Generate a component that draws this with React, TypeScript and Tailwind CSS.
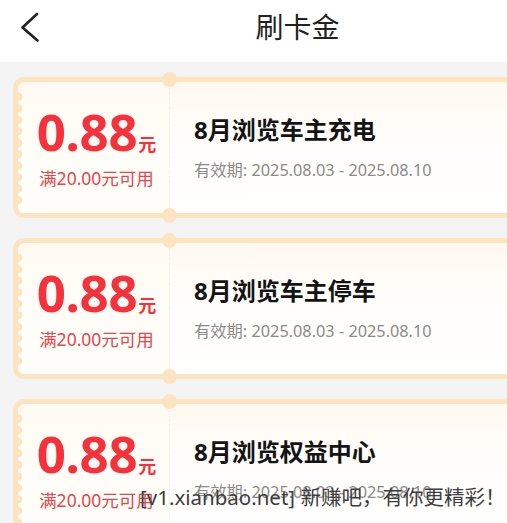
import React from 'react'

const coupons = [
  { id: 1, title: '8月浏览车主充电' },
  { id: 2, title: '8月浏览车主停车' },
  { id: 3, title: '8月浏览权益中心' },
]

const sans = "font-['Noto_Sans','Noto_Sans_CJK_SC',sans-serif]"

function Coupon({ title }: { title: string }) {
  return (
    <div className="flex h-[141px] rounded-[11px] border-[5px] border-[#fde4c1] bg-[linear-gradient(180deg,#fff8ef_0%,#fffdfa_40%,#ffffff_100%)]">
      {/* scalloped left edge */}
      <div className="my-[9px] w-[6px] shrink-0 bg-[radial-gradient(circle_at_0_50%,#fde4c1_4px,transparent_4.6px)] bg-[length:6px_11.5px] bg-repeat-y" />

      {/* amount */}
      <div className="flex w-[145px] shrink-0 flex-col items-center justify-center bg-[#fffbf5]/60">
        <div className="flex items-baseline font-bold text-[#f5323c]">
          <span className="text-[51px] leading-none tracking-[-0.3px]">0.88</span>
          <span className="ml-[1px] text-[18px] leading-none">元</span>
        </div>
        <div className="mt-[9px] text-[17.5px] leading-[24px] text-[#e2474d]">满20.00元可用</div>
      </div>

      {/* divider with notches */}
      <div className="flex w-0 shrink-0 flex-col justify-between border-l border-dashed border-[#fcefdc]">
        <div className="-mt-[10px] -ml-[8px] size-[15px] rounded-full bg-[#fde4c1]" />
        <div className="-mb-[10px] -ml-[8px] size-[15px] rounded-full bg-[#fde4c1]" />
      </div>

      {/* info */}
      <div className="flex flex-col justify-center pl-[24px]">
        <div className="text-[24px] font-bold leading-[30px] text-[#141414]">{title}</div>
        <div className="mt-[14px] text-[16.3px] leading-[22px] text-[#8a8a8a]">
          有效期: 2025.08.03 - 2025.08.10
        </div>
      </div>
    </div>
  )
}

export default function App() {
  return (
    <div className={`relative h-[523px] w-[507px] overflow-hidden bg-[#f4f4f4] ${sans}`}>
      <div className="w-[595px]">
        {/* Header */}
        <div className="grid h-[62px] grid-cols-[60px_1fr_60px] items-center bg-white pb-[9px]">
          <div className="pl-[20px]">
            <svg width="22" height="30" viewBox="0 0 22 30" fill="none">
              <path d="M17 2 L2.5 15.5 L17.5 28.5" stroke="#222" strokeWidth="2.6" strokeLinecap="round" strokeLinejoin="round" />
            </svg>
          </div>
          <div className="text-center text-[28px] leading-[36px] text-[#222]">刷卡金</div>
          <div />
        </div>

        {/* Coupons */}
        <div className="flex flex-col gap-[20px] px-[13px] pt-[15px]">
          {coupons.map((c) => (
            <Coupon key={c.id} title={c.title} />
          ))}
        </div>
      </div>

      {/* watermark */}
      <div className="absolute left-[140px] top-[482px] text-[20.5px] leading-[30px] text-[#3d3d3d]">
        [v1.xianbao.net] 新赚吧，有你更精彩！
      </div>
    </div>
  )
}
